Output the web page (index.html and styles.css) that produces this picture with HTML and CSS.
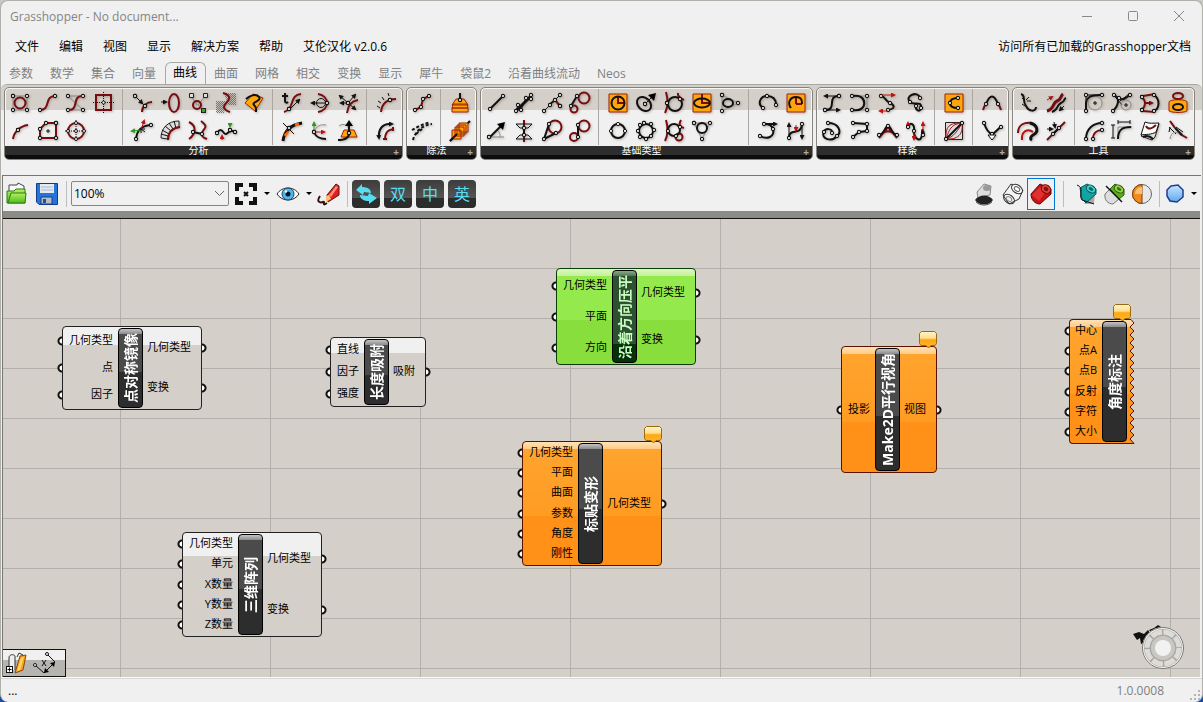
FILE: index.html
```html
<!DOCTYPE html>
<html lang="zh-CN">
<head>
    <meta charset="UTF-8">
    <meta name="viewport" content="width=device-width, initial-scale=1.0">
    <title>Grasshopper - No document...</title>
    <link rel="stylesheet" href="styles.css">
</head>
<body>

<svg class="defs" aria-hidden="true">
    <defs>
        <marker id="dot" markerUnits="userSpaceOnUse" markerWidth="6" markerHeight="6" refX="3" refY="3"><circle cx="3" cy="3" r="1.6" fill="#fff" stroke="#111" stroke-width="1.1"/></marker>
        <marker id="arr" markerUnits="userSpaceOnUse" markerWidth="5" markerHeight="5" refX="3" refY="2.5" orient="auto-start-reverse"><path d="M0 0L5 2.500L0 5Z" fill="context-stroke"/></marker>
        <pattern id="dither" width="2" height="2" patternUnits="userSpaceOnUse"><path d="M0 0H1V1H0ZM1 1H2V2H1Z" fill="#777"/></pattern>
        <linearGradient id="gold" x1="0" y1="0" x2="0" y2="1"><stop offset="0" stop-color="#fff3d0"/><stop offset=".4" stop-color="#ffe08a"/><stop offset=".5" stop-color="#ffa814"/><stop offset="1" stop-color="#ffb62c"/></linearGradient>
        <linearGradient id="edge" x1="0" y1="0" x2="0" y2="1"><stop offset="0" stop-color="#ffe2b8"/><stop offset=".06" stop-color="#ffcb84"/><stop offset=".06" stop-color="#ffa42e"/><stop offset=".6" stop-color="#ff9c22"/><stop offset=".6" stop-color="#ff9018"/></linearGradient>
        <linearGradient id="blue" x1="0" y1="0" x2="0" y2="1"><stop offset="0" stop-color="#c8e6ff"/><stop offset="1" stop-color="#5fa8ee"/></linearGradient>
        <linearGradient id="leaf" x1="0" y1="0" x2="0" y2="1"><stop offset="0" stop-color="#b4f060"/><stop offset="1" stop-color="#4cbc1c"/></linearGradient>
    </defs>
</svg>

<div class="window">
    <header class="titlebar">
        <span class="title">Grasshopper - No document...</span>
        <div class="window-buttons">
            <button aria-label="最小化"><svg width="12" height="12"><path d="M1 6.500H11"/></svg></button>
            <button aria-label="最大化"><svg width="12" height="12"><rect x="1.500" y="1.500" width="9" height="9" rx="1"/></svg></button>
            <button aria-label="关闭"><svg width="12" height="12"><path d="M1 1L11 11M11 1L1 11"/></svg></button>
        </div>
    </header>

    <nav class="menubar">
        <a href="#">文件</a>
        <a href="#">编辑</a>
        <a href="#">视图</a>
        <a href="#">显示</a>
        <a href="#">解决方案</a>
        <a href="#">帮助</a>
        <a href="#">艾伦汉化 v2.0.6</a>
        <a href="#" class="docs">访问所有已加载的Grasshopper文档</a>
    </nav>

    <nav class="tabs">
        <a href="#">参数</a>
        <a href="#">数学</a>
        <a href="#">集合</a>
        <a href="#">向量</a>
        <a href="#" class="active">曲线</a>
        <a href="#">曲面</a>
        <a href="#">网格</a>
        <a href="#">相交</a>
        <a href="#">变换</a>
        <a href="#">显示</a>
        <a href="#">犀牛</a>
        <a href="#">袋鼠2</a>
        <a href="#">沿着曲线流动</a>
        <a href="#">Neos</a>
    </nav>

    <div class="ribbon">
        <section class="panel">
            <div class="groups">
                <div class="group cols-4">
                    <button aria-label="控制多边形"><svg viewBox="0 0 24 24"><path class="g n" d="M5 5H19V19H5Z"/><circle class="r" cx="12" cy="12" r="5.500"/></svg></button>
                    <button aria-label="端点"><svg viewBox="0 0 24 24"><path class="r n" d="M4 19C15 19 8 5 19 5"/></svg></button>
                    <button aria-label="控制点"><svg viewBox="0 0 24 24"><path class="g n" d="M4 19H19L4 5H19"/><path class="r" d="M5 19C15 19 8 5 18 5"/></svg></button>
                    <button aria-label="平面"><svg viewBox="0 0 24 24"><rect class="r" x="4" y="4" width="15" height="15"/><path class="t dots" d="M11.500 1V23M1 11.500H23"/><circle class="w" cx="11.500" cy="11.500" r="1.500"/></svg></button>
                    <button aria-label="中点"><svg viewBox="0 0 24 24"><path class="r" d="M5 20C6 13 12 7 20 6"/><path class="t n" d="M10 11V11"/></svg></button>
                    <button aria-label="多边形中心"><svg viewBox="0 0 24 24"><path class="r n" d="M20 4V19H4V10L10 4Z"/><path class="t" d="M12 10V14M10 12H14"/></svg></button>
                    <button aria-label="圆心"><svg viewBox="0 0 24 24"><circle class="r" cx="12" cy="12" r="8"/><path class="t dots" d="M12 1V23M1 12H23"/><circle class="w" cx="12" cy="12" r="1.500"/><circle class="w" cx="12" cy="4" r="1.500"/><circle class="w" cx="12" cy="20" r="1.500"/><circle class="w" cx="4" cy="12" r="1.500"/><circle class="w" cx="20" cy="12" r="1.500"/></svg></button>
                </div>
                <div class="group cols-5">
                    <button aria-label="曲线最近点"><svg viewBox="0 0 24 24"><path class="r" d="M12 21C12 15 17 11 22 11"/><path class="t a" d="M5 5L12 12"/><path class="t n" d="M5 5V5"/><path class="t n" d="M15 15V15"/></svg></button>
                    <button aria-label="闭合"><svg viewBox="0 0 24 24"><ellipse class="r" cx="16" cy="12" rx="5" ry="9"/><path class="t a" d="M3 11H8"/></svg></button>
                    <button aria-label="包含"><svg viewBox="0 0 24 24"><path class="g" d="M5 5L11 14M19 5L12 14L17 19"/><circle class="r" cx="11" cy="14" r="4"/><path class="box" d="M3.500 2.500H7.500V6.500H3.500ZM17.500 2.500H21.500V6.500H17.500Z"/><rect class="leaf" x="15.500" y="17.500" width="4" height="4"/></svg></button>
                    <button aria-label="曲线侧面"><svg viewBox="0 0 24 24"><path fill="url(#dither)" d="M2 10H12L10 22H2ZM10 2H22V14H14Z"/><path class="r" d="M9 2C13 3 16 5 15 8S10 13 10 16S13 20 16 21"/></svg></button>
                    <button aria-label="曲率曲面"><svg viewBox="0 0 24 24"><path class="o" d="M3 12L11 3L21 7L13 20Z"/><path class="k" d="M4 8C7 5 14 2 17 6S9 11 12 14S14 17 14 21"/></svg></button>
                    <button aria-label="曲率"><svg viewBox="0 0 24 24"><path class="k n" d="M6 20C7 12 10 7 21 6"/><path class="t a up" d="M11 11L2 12"/><path class="t a red" d="M11 11L14 2"/><path class="t" d="M15 13L11 10M11 14V10H15"/></svg></button>
                    <button aria-label="曲率图"><svg viewBox="0 0 24 24"><path class="box" d="M10 20C10 13 14 9 21 8V2C10 2 3 9 3 19Z"/><path class="t" d="M10 17L3 15M11 15L4 11M13 12L7 7M15 10L11 4M18 9L16 2"/><path class="r" d="M10 21C10 13 14 9 22 8"/></svg></button>
                    <button aria-label="曲线接近"><svg viewBox="0 0 24 24"><path class="r" d="M3 3C11 7 10 15 3 20M15 2C24 9 17 9 16 14S19 19 21 20"/><path class="k n" d="M7 13L16 15"/></svg></button>
                    <button aria-label="极值"><svg viewBox="0 0 24 24"><path class="k" d="M3 15C5 10 7 10 10 14S14 9 21 13"/><path class="t n" d="M3 14V14"/><path class="t n" d="M16 11V11"/><path class="t n" d="M21 13V13"/><path class="t a red" d="M8 21V17"/><path class="t a up" d="M16 4V7"/></svg></button>
                </div>
                <div class="group cols-3">
                    <button aria-label="求值曲线"><svg viewBox="0 0 24 24"><path class="k" d="M5 2V10C5 12 7 12 8 11M2 5H8"/><path class="r" d="M4 21C15 18 9 4 21 3"/><path class="t a" d="M9 19L19 9"/><path class="t n" d="M9 18V18"/></svg></button>
                    <button aria-label="水平框架"><svg viewBox="0 0 24 24"><path class="r" d="M10 3C22 5 22 19 10 21"/><circle class="t" cx="13" cy="12" r="4.500"/><path class="t a" d="M18 12H4"/><path class="t n" d="M19 12V12"/></svg></button>
                    <button aria-label="垂直框架"><svg viewBox="0 0 24 24"><path class="r" d="M11 22C12 13 16 10 22 9"/><path class="t a" d="M12 12L4 5"/><path class="t a" d="M12 12L19 4"/><path class="t a" d="M12 12L19 18"/><path class="t a" d="M12 12L5 12"/><path class="t n" d="M12 12V12"/></svg></button>
                    <button aria-label="导数"><svg viewBox="0 0 24 24"><path class="k b" d="M3 22C4 14 9 6 22 4"/><path class="s" d="M5 17L8 12M15 6L19 5"/><path class="t" d="M3 4L14 15M5 14L14 6"/><path class="t n" d="M9 9V9"/></svg></button>
                    <button aria-label="曲线框架"><svg viewBox="0 0 24 24"><path class="g" d="M6 13C8 7 13 5 18 6"/><path class="k" d="M6 13C8 18 11 20 18 20"/><path class="t a up" d="M6 13V4"/><path class="t a red" d="M6 13H16"/><path class="t n" d="M6 13V13"/></svg></button>
                    <button aria-label="垂直平面"><svg viewBox="0 0 24 24"><path class="o" d="M8 11H18L21 18H5Z"/><path class="g" d="M3 7C8 3 14 7 13 14"/><path class="k" d="M2 21C8 21 13 19 13 14"/><path class="k" d="M13 14V6"/><path d="M9 7H17L13 1Z"/><path class="t n" d="M13 14V14"/></svg></button>
                </div>
                <div class="group cols-1">
                    <button aria-label="长度"><svg viewBox="0 0 24 24"><path class="r" d="M7 21C8 12 13 8 22 8"/><path class="t" d="M3 15L6 17M4 10L7 12M8 6L10 9M14 2L15 5"/><path class="t n" d="M16 9V9"/></svg></button>
                    <button aria-label="子曲线"><svg viewBox="0 0 24 24"><path class="k a" d="M17 5C9 4 4 10 5 19"/><path class="t a" d="M14 5H18"/><path class="r" d="M11 21C11 14 13 11 20 10"/><path class="r" d="M9 20H13M19 8V12"/></svg></button>
                </div>
            </div>
            <h2>分析</h2>
        </section>

        <section class="panel">
            <div class="groups">
                <div class="group cols-1">
                    <button aria-label="等分曲线"><svg viewBox="0 0 24 24"><path class="r n" d="M5 19L11 16L13 8L19 5"/></svg></button>
                    <button aria-label="距离等分"><svg viewBox="0 0 24 24"><path class="k dash" d="M3 21C5 13 12 6 22 5"/><path class="k dash" d="M2 11L9 7L20 3M6 15L12 10"/></svg></button>
                </div>
                <div class="group cols-1">
                    <button aria-label="等高线"><svg viewBox="0 0 24 24"><path class="o" d="M8 8H16L20 14H4ZM5 13H19L20 17H4ZM4 17H20V21H4Z"/><path class="k" d="M12 2V8"/><path class="t n" d="M12 9V9"/></svg></button>
                    <button aria-label="虚线"><svg viewBox="0 0 24 24"><path class="k" d="M2 22L22 2"/><path class="o" d="M11 4H20V13H11ZM9 6H18V15H9ZM7 8H16V17H7ZM4 11H13V20H4Z"/><path class="k" d="M2 22L9 15"/></svg></button>
                </div>
            </div>
            <h2>除法</h2>
        </section>

        <section class="panel">
            <div class="groups">
                <div class="group cols-4">
                    <button aria-label="直线"><svg viewBox="0 0 24 24"><path class="k n" d="M6 18L19 5"/></svg></button>
                    <button aria-label="四点直线"><svg viewBox="0 0 24 24"><path class="k b" d="M5 19L19 5"/><path class="t n" d="M4 20L6 14L9 19L14 7L19 8V4"/></svg></button>
                    <button aria-label="切线"><svg viewBox="0 0 24 24"><path class="r" d="M15 9L20 15"/><path class="k" d="M9 14L15 9"/><path class="t n" d="M4 20L10 14"/><path class="t n" d="M15 9L20 4"/><path class="t n" d="M20 15V15"/></svg></button>
                    <button aria-label="外切线"><svg viewBox="0 0 24 24"><circle class="r" cx="16" cy="7" r="5.500"/><circle class="r" cx="6" cy="18" r="3.500"/><path class="k n" d="M3 15L9 5"/></svg></button>
                    <button aria-label="向量直线"><svg viewBox="0 0 24 24"><path class="g" d="M6 18H20M13 11C16 13 16 16 16 18"/><path class="k" d="M6 18L17 7"/><path d="M21 3L19 11L13 5Z"/><path class="t n" d="M5 18V18"/></svg></button>
                    <button aria-label="两平面直线"><svg viewBox="0 0 24 24"><path class="r" d="M12 1V8M12 16V23"/><path class="t" d="M4 5H20L16 9H8ZM4 20H20L16 16H8Z"/><path class="k n" d="M12 9V16"/></svg></button>
                    <button aria-label="圆切线"><svg viewBox="0 0 24 24"><circle class="r" cx="15" cy="8" r="6.500"/><path class="k n" d="M9 5L4 20L16 14"/></svg></button>
                    <button aria-label="内切线"><svg viewBox="0 0 24 24"><circle class="r" cx="16" cy="7" r="5.500"/><circle class="r" cx="6" cy="18" r="4"/><path class="k n" d="M10 6L10 18"/></svg></button>
                </div>
                <div class="group cols-5">
                    <button aria-label="圆"><svg viewBox="0 0 24 24"><path class="o" d="M3 3H21V21H3Z"/><path class="r" d="M12 5V12H19"/><circle class="k" cx="12" cy="12" r="6.500"/></svg></button>
                    <button aria-label="圆 CNR"><svg viewBox="0 0 24 24"><ellipse class="k" cx="10" cy="13" rx="6" ry="8" transform="rotate(-45 10 13)"/><path class="t" d="M11 13L17 7"/><path d="M22 2L20 10L14 4Z"/><path class="t n" d="M11 13V13"/></svg></button>
                    <button aria-label="三切圆"><svg viewBox="0 0 24 24"><path class="r" d="M4 1C6 8 6 16 3 22M16 2C15 6 20 8 22 9"/><circle class="k" cx="13" cy="13" r="7"/><path class="t n" d="M5 12V12"/><path class="t n" d="M18 8V8"/></svg></button>
                    <button aria-label="椭圆"><svg viewBox="0 0 24 24"><path class="o" d="M3 3H21V21H3Z"/><path class="r" d="M12 3V12H20"/><ellipse class="k" cx="12" cy="12" rx="8" ry="4.500"/></svg></button>
                    <button aria-label="内切椭圆"><svg viewBox="0 0 24 24"><path class="g n" d="M4 4L20 12L4 20Z"/><ellipse class="k" cx="10" cy="12" rx="5" ry="4"/></svg></button>
                    <button aria-label="三点圆"><svg viewBox="0 0 24 24"><circle class="k" cx="12" cy="12" r="7"/><circle class="w" cx="12" cy="5" r="1.600"/><circle class="w" cx="5" cy="12" r="1.600"/><circle class="w" cx="19" cy="12" r="1.600"/></svg></button>
                    <button aria-label="拟合圆"><svg viewBox="0 0 24 24"><circle class="k" cx="12" cy="12" r="7"/><path class="none n" d="M10 4L17 5L20 11L17 17L12 20L6 18L4 12L6 6Z"/></svg></button>
                    <button aria-label="两切圆"><svg viewBox="0 0 24 24"><path class="r" d="M4 1C6 8 6 16 3 22M19 1C16 6 18 8 22 9"/><circle class="r" cx="17" cy="18" r="3.500"/><circle class="k" cx="12" cy="11" r="6"/><path class="none n" d="M6 12L18 8L14 17"/></svg></button>
                    <button aria-label="内切圆"><svg viewBox="0 0 24 24"><path class="g n" d="M4 4H20L12 20Z"/><circle class="k" cx="12" cy="9" r="5"/></svg></button>
                </div>
                <div class="group cols-2">
                    <button aria-label="三点弧"><svg viewBox="0 0 24 24"><path class="k n" d="M7 17C1 13 4 5 11 5S20 9 20 14"/></svg></button>
                    <button aria-label="弧"><svg viewBox="0 0 24 24"><path class="o" d="M3 3H21V21H3Z"/><path class="r" d="M12 13V6M12 13H18"/><path class="k" d="M7 17C3 12 6 6 12 6S18 10 18 13"/></svg></button>
                    <button aria-label="SED 弧"><svg viewBox="0 0 24 24"><path class="k a" d="M7 5H20"/><path class="k n" d="M4 17C11 21 19 18 17 10C16 6 13 5 8 5"/></svg></button>
                    <button aria-label="双弧"><svg viewBox="0 0 24 24"><path class="t a" d="M5 19V5"/><path class="t a" d="M18 5V19"/><path class="k n" d="M5 19C5 8 17 18 18 5"/><path class="t a red" d="M12 6V11"/></svg></button>
                </div>
            </div>
            <h2>基础类型</h2>
        </section>

        <section class="panel">
            <div class="groups">
                <div class="group cols-4">
                    <button aria-label="贝塞尔"><svg viewBox="0 0 24 24"><path class="k" d="M19 5C6 5 18 19 5 19"/><path class="t a" d="M19 5H5"/><path class="t a" d="M5 19H19"/><path class="t n" d="M19 5V5"/><path class="t n" d="M5 19V19"/></svg></button>
                    <button aria-label="插值曲线"><svg viewBox="0 0 24 24"><path class="g n" d="M4 5H19V19H4"/><path class="k" d="M5 5C20 2 20 22 5 19"/></svg></button>
                    <button aria-label="切线曲线"><svg viewBox="0 0 24 24"><path class="k n" d="M5 5C9 5 9 10 14 12C20 15 18 18 12 19"/><path class="t a red" d="M6 4H18"/><path class="t a red" d="M12 20H4"/></svg></button>
                    <button aria-label="运动线"><svg viewBox="0 0 24 24"><path class="k n" d="M16 7C14 -1 0 5 6 11C9 15 18 9 17 17C16 22 11 19 12 15"/></svg></button>
                    <button aria-label="闭合曲线"><svg viewBox="0 0 24 24"><path class="k n" d="M8 4C19 4 22 13 17 17C11 24 0 19 4 13C5 9 13 9 12 14"/></svg></button>
                    <button aria-label="多段线"><svg viewBox="0 0 24 24"><path class="k n" d="M5 4L19 5V12L11 13L5 18"/></svg></button>
                    <button aria-label="悬链线"><svg viewBox="0 0 24 24"><path class="r" d="M3 19C8 10 16 10 21 19M3 19L12 8L21 19"/><path class="k n" d="M3 16C8 16 9 7 12 7S16 16 21 16"/></svg></button>
                    <button aria-label="正弦曲线"><svg viewBox="0 0 24 24"><path class="k" d="M4 8C6 2 11 5 10 12S18 26 18 14C18 10 19 9 20 16"/><path class="t a red" d="M4 9V4"/><path class="t a red" d="M10 12V20"/><path class="t a red" d="M19 12V4"/><path class="none n" d="M4 8L10 12L19 16"/></svg></button>
                </div>
                <div class="group cols-1">
                    <button aria-label="测地线"><svg viewBox="0 0 24 24"><path class="o" d="M3 3H21V21H3Z"/><path class="k n" d="M16 7C10 7 8 9 8 12S10 17 16 17"/></svg></button>
                    <button aria-label="补间曲线"><svg viewBox="0 0 24 24"><path class="box" d="M3.500 3.500H20.500V20.500H3.500Z"/><path class="rt" d="M4 20C3 5 10 4 20 4M4 20C8 6 13 5 20 4M4 20C11 19 17 10 20 4M4 20C19 21 21 12 20 4"/><path class="k n" d="M4 20L20 4"/></svg></button>
                </div>
                <div class="group cols-1">
                    <button aria-label="混合曲线"><svg viewBox="0 0 24 24"><path class="r" d="M3 19C4 15 5 14 7 12M21 19C20 15 19 14 17 12"/><path class="k n" d="M6 13C10 3 14 3 18 13"/></svg></button>
                    <button aria-label="连接曲线"><svg viewBox="0 0 24 24"><path class="k n" d="M4 4C6 10 8 14 12 15C16 14 17 10 21 8"/><path class="w" d="M8 16H16L12 21Z"/></svg></button>
                </div>
            </div>
            <h2>样条</h2>
        </section>

        <section class="panel">
            <div class="groups">
                <div class="group cols-2">
                    <button aria-label="延伸曲线"><svg viewBox="0 0 24 24"><path class="k" d="M5 3C10 4 6 10 10 15C13 21 20 21 20 16"/><path class="t" d="M6 7L9 9M13 6L10 9M15 10H11M6 13L9 15"/></svg></button>
                    <button aria-label="翻转曲线"><svg viewBox="0 0 24 24"><path class="r b" d="M3 20C11 18 8 12 13 10S16 5 19 3"/><path class="k" d="M8 21C15 19 12 14 17 12S19 8 22 7"/><path class="rt a" d="M3 9L8 6"/><path class="t a" d="M20 15L16 19"/></svg></button>
                    <button aria-label="连接"><svg viewBox="0 0 24 24"><path class="r" d="M2 14C2 5 9 3 16 4"/><path class="red r" d="M6 21C5 12 12 9 17 13"/><path class="k b" d="M14 4C22 6 23 13 17 16C14 18 14 20 16 21"/></svg></button>
                    <button aria-label="分段"><svg viewBox="0 0 24 24"><path class="r" d="M3 21L21 3"/><path class="k n" d="M9 15L15 9"/><path class="t a" d="M3 10H8"/><path class="t a" d="M10 3L11 8"/></svg></button>
                </div>
                <div class="group cols-4">
                    <button aria-label="倒角"><svg viewBox="0 0 24 24"><circle class="g" cx="13" cy="12" r="7"/><path class="t" d="M13 10V14M11 12H15"/><path class="t n" d="M4 20V4H20"/><path class="k" d="M4 19V12C5 6 8 4 19 4"/></svg></button>
                    <button aria-label="距离倒角"><svg viewBox="0 0 24 24"><path class="t" d="M3 3L12 14M10 10L19 3"/><circle class="g" cx="16" cy="14" r="5"/><path class="k n" d="M4 4C10 7 9 14 3 20"/><path class="k n" d="M9 7C12 10 16 7 20 4"/><path class="t" d="M16 12V16M14 14H18"/></svg></button>
                    <button aria-label="偏移曲线"><svg viewBox="0 0 24 24"><path class="r" d="M4 6C8 10 8 15 4 19M5 5L17 3M5 20L17 21"/><path class="k n" d="M16 4C22 8 22 17 16 20"/><path class="r a" d="M7 12H14"/><path class="t n" d="M4 6V6"/><path class="t n" d="M4 19V19"/></svg></button>
                    <button aria-label="投影"><svg viewBox="0 0 24 24"><path class="o" d="M3 11C3 8 21 8 21 11V20C17 22 7 22 3 20Z"/><ellipse class="r" cx="12" cy="5" rx="5" ry="3"/><ellipse class="k" cx="12" cy="16" rx="5" ry="3"/></svg></button>
                    <button aria-label="偏移"><svg viewBox="0 0 24 24"><path class="k n" d="M4 20C4 10 11 4 20 4"/><path class="r n" d="M11 20C11 14 15 11 20 11"/></svg></button>
                    <button aria-label="圆角距离"><svg viewBox="0 0 24 24"><path class="t" d="M3 6V19M1 6H5M1 19H5M8 3H20M8 1V5M20 1V5"/><path class="g" d="M8 8H22M8 8V20"/><path class="k" d="M8 20C8 11 12 8 21 8"/></svg></button>
                    <button aria-label="拉回曲线"><svg viewBox="0 0 24 24"><path class="box" d="M3 17L9 10L21 5L17 18L14 21Z"/><path class="w" d="M7 3C11 5 16 4 21 4L18 13C13 16 8 15 3 16Z"/><path class="r" d="M8 7C10 11 14 10 18 6"/><path class="k" d="M5 18C9 16 13 18 15 20"/></svg></button>
                    <button aria-label="简化"><svg viewBox="0 0 24 24"><path class="r" d="M4 2L9 9M14 15L21 19"/><path class="t" d="M4 8L3 13M3 8L10 15M10 8L17 13"/><path class="g" d="M4 20C5 13 10 11 14 16"/><path class="k" d="M9 9L16 16"/></svg></button>
                </div>
            </div>
            <h2>工具</h2>
        </section>
    </div>

    <div class="toolbar">
        <button class="tool" aria-label="打开"><svg width="24" height="24" viewBox="0 0 24 24"><path d="M4 9V3H12L13 1L19 4V9" fill="#fafafa" stroke="#444"/><path d="M2 21V9H9L11 7H20V21Z" fill="url(#leaf)" stroke="#2f7d12"/><path d="M3 21L6 11H21L20 21Z" fill="url(#leaf)" stroke="#2f7d12"/></svg></button>
        <button class="tool save" aria-label="保存"><svg width="24" height="24" viewBox="0 0 24 24"><path d="M1.500 1.500H22.500V22.500H4L1.500 20Z" fill="#2474da" stroke="#163c88"/><path d="M5 2H19V11H5Z" fill="#e4eaf2"/><path d="M6 5H18M6 8H18" stroke="#aab8cc"/><path d="M6 15H17V22H6Z" fill="#b8bcc6" stroke="#163c88"/><path d="M8 17H11V21H8Z" fill="#1c4ea4"/></svg></button>
        <span class="sep"></span>
        <select aria-label="缩放"><option>100%</option></select>
        <button class="tool" aria-label="缩放范围"><svg width="24" height="24" viewBox="0 0 24 24"><path d="M3 9V3H9M15 3H21V9M21 15V21H15M9 21H3V15" fill="none" stroke="#111" stroke-width="4"/><path d="M10 10L14 14M14 10L10 14" stroke="#111" stroke-width="2"/></svg></button>
        <button class="caret" aria-label="缩放选项"></button>
        <button class="tool" aria-label="命名视图"><svg width="24" height="24" viewBox="0 0 24 24"><path d="M1 12C6 4 18 4 23 12C18 20 6 20 1 12Z" fill="#fff" stroke="#222"/><circle cx="12" cy="12" r="6" fill="#55b4e6" stroke="#17486e"/><circle cx="12" cy="12" r="2.500" fill="#081828"/><circle cx="10" cy="9.500" r="1.200" fill="#fff"/></svg></button>
        <button class="caret" aria-label="视图选项"></button>
        <button class="tool pen" aria-label="草图"><svg width="24" height="24" viewBox="0 0 24 24"><path d="M3 14C-1 20 3 21 6 20S4 25 10 21" fill="none" stroke="#311" stroke-width="2"/><path d="M10 13L19 2L22 4V13L11 20Z" fill="#e02020" stroke="#6a0d0d"/><path d="M12 13L19 4L21 5L14 15Z" fill="#ff8d78"/><path d="M9 14L12 13L14 17L9 20Z" fill="#ffc070"/></svg></button>
        <span class="sep"></span>
        <button class="lang" aria-label="切换"><svg width="24" height="24" viewBox="0 0 24 24"><path fill="#5adcf0" d="M8 2V5C13 5 17 7 17 11L10 10L9 13L2 8ZM15 22V19C10 19 6 17 6 13L14 14L15 11L23 16Z"/></svg></button>
        <button class="lang">双</button>
        <button class="lang">中</button>
        <button class="lang">英</button>

        <div class="display">
            <button class="tool wide" aria-label="不预览"><svg width="24" height="24" viewBox="0 0 24 24"><path d="M5 10L12 2L19 4L18 13L6 16Z" fill="#ddd" stroke="#888"/><ellipse cx="15" cy="6" rx="4" ry="3" fill="#999"/><path d="M3 18C7 12 17 12 21 18C17 24 7 24 3 18Z" fill="#222"/><path d="M4 20C8 24 16 24 20 20" fill="none" stroke="#555"/></svg></button>
            <button class="tool wide" aria-label="线框预览"><svg width="24" height="24" viewBox="0 0 24 24"><path d="M2 13L10 2L22 8L18 17L8 22Z" fill="#f4f4f4" stroke="#333"/><ellipse cx="16" cy="7" rx="6" ry="4" transform="rotate(35 16 7)" fill="#fff" stroke="#333"/><ellipse cx="16" cy="7" rx="3" ry="2" transform="rotate(35 16 7)" fill="none" stroke="#555"/><ellipse cx="8" cy="17" rx="6" ry="4" transform="rotate(35 8 17)" fill="none" stroke="#333"/><ellipse cx="8" cy="17" rx="3" ry="2" transform="rotate(35 8 17)" fill="none" stroke="#888"/></svg></button>
            <button class="tool on" aria-label="着色预览"><svg width="24" height="24" viewBox="0 0 24 24"><path d="M2 12L11 2L22 7V12L11 22C6 22 2 18 2 12Z" fill="#c81414" stroke="#5e0808"/><path d="M3 13L11 5L17 10L10 19Z" fill="#e03030"/><ellipse cx="17" cy="7" rx="5" ry="4" transform="rotate(35 17 7)" fill="#e24242" stroke="#6a0a0a"/><ellipse cx="17" cy="7" rx="2.500" ry="2" transform="rotate(35 17 7)" fill="#8a0e0e"/></svg></button>
            <span class="sep"></span>
            <button class="tool" aria-label="仅选中"><svg width="24" height="24" viewBox="0 0 24 24"><path d="M9 22L20 22L21 10L12 21Z" fill="#aaa"/><path d="M6 6L13 2L22 7V12L12 21L8 17Z" fill="#12a3a3" stroke="#075656"/><ellipse cx="17" cy="7" rx="5" ry="3.500" transform="rotate(30 17 7)" fill="#3fd0cc" stroke="#075656"/><ellipse cx="17" cy="7" rx="2.500" ry="1.500" transform="rotate(30 17 7)" fill="#0a6464"/><path d="M3 3C11 6 4 13 8 18L20 22" fill="none" stroke="#111"/></svg></button>
            <button class="tool" aria-label="文档预览"><svg width="24" height="24" viewBox="0 0 24 24"><path d="M3 12L8 7L17 17L11 22C6 22 2 18 3 12Z" fill="#ddd" stroke="#777"/><path d="M8 7L13 2L22 7V13L17 17Z" fill="#5cab1e" stroke="#2c5a0a"/><ellipse cx="17" cy="7" rx="5" ry="3.500" transform="rotate(30 17 7)" fill="#98d850" stroke="#2c5a0a"/><ellipse cx="17" cy="7" rx="2.500" ry="1.500" transform="rotate(30 17 7)" fill="#3a7010"/><path d="M4 4L20 20" stroke="#111" stroke-width="1.500"/></svg></button>
            <button class="tool" aria-label="预览网格"><svg width="24" height="24" viewBox="0 0 24 24"><circle cx="12" cy="12" r="9.500" fill="#e8e8e8" stroke="#666"/><path d="M12 2.500A9.500 9.500 0 0 0 12 21.500Z" fill="#f08a1c" stroke="#7a3c06"/><path d="M5 12C5 8 8 5 12 5V12Z" fill="#ffc070"/></svg></button>
            <span class="sep near"></span>
            <button class="tool" aria-label="预览质量"><svg width="24" height="24" viewBox="0 0 24 24"><path d="M8 4L15 3L20 8L20 15L14 20L7 19L4 14L4 8Z" fill="url(#blue)" stroke="#1c3f8c" stroke-width="1.500"/></svg></button>
            <button class="caret" aria-label="质量选项"></button>
        </div>
    </div>

    <main class="canvas">
        <div class="node gray mirror">
            <ul class="in"><li>几何类型</li><li>点</li><li>因子</li></ul>
            <div class="core"><span>点对称镜像</span></div>
            <ul class="out"><li>几何类型</li><li>变换</li></ul>
        </div>

        <div class="node gray snap">
            <ul class="in"><li>直线</li><li>因子</li><li>强度</li></ul>
            <div class="core"><span>长度吸附</span></div>
            <ul class="out"><li>吸附</li></ul>
        </div>

        <div class="node green flatten">
            <ul class="in"><li>几何类型</li><li>平面</li><li>方向</li></ul>
            <div class="core"><span>沿着方向压平</span></div>
            <ul class="out"><li>几何类型</li><li>变换</li></ul>
        </div>

        <div class="node orange splop">
            <svg class="balloon" width="18" height="18" viewBox="0 0 18 18"><path d="M2.500 0.500H15.500L17.500 2.500V12.500L16 14.500H12L9.500 17L7 14.500H2L0.500 12.500V2.500Z" fill="url(#gold)" stroke="#9a6a10"/></svg>
            <ul class="in"><li>几何类型</li><li>平面</li><li>曲面</li><li>参数</li><li>角度</li><li>刚性</li></ul>
            <div class="core"><span>标贴变形</span></div>
            <ul class="out"><li>几何类型</li></ul>
        </div>

        <div class="node orange make2d">
            <svg class="balloon" width="18" height="18" viewBox="0 0 18 18"><path d="M2.500 0.500H15.500L17.500 2.500V12.500L16 14.500H12L9.500 17L7 14.500H2L0.500 12.500V2.500Z" fill="url(#gold)" stroke="#9a6a10"/></svg>
            <ul class="in"><li>投影</li></ul>
            <div class="core"><span>Make2D平行视角</span></div>
            <ul class="out"><li>视图</li></ul>
        </div>

        <div class="node orange angle">
            <svg class="balloon" width="18" height="18" viewBox="0 0 18 18"><path d="M2.500 0.500H15.500L17.500 2.500V12.500L16 14.500H12L9.500 17L7 14.500H2L0.500 12.500V2.500Z" fill="url(#gold)" stroke="#9a6a10"/></svg>
            <svg class="torn" width="6" height="125" viewBox="0 0 6 125"><path d="M0 .5H2L5 4L1 8L5 12L1 16L5 20L1 24L5 28L1 32L5 36L1 40L5 44L1 48L5 52L1 56L5 60L1 64L5 68L1 72L5 76L1 80L5 84L1 88L5 92L1 96L5 100L1 104L5 108L1 112L5 116L1 120L5 124.500H0" fill="url(#edge)" stroke="#5a1200"/></svg>
            <ul class="in"><li>中心</li><li>点A</li><li>点B</li><li>反射</li><li>字符</li><li>大小</li></ul>
            <div class="core"><span>角度标注</span></div>
        </div>

        <div class="node gray array">
            <ul class="in"><li>几何类型</li><li>单元</li><li>X数量</li><li>Y数量</li><li>Z数量</li></ul>
            <div class="core"><span>三维阵列</span></div>
            <ul class="out"><li>几何类型</li><li>变换</li></ul>
        </div>

        <div class="markov">
            <button aria-label="添加组件"><svg width="28" height="26" viewBox="0 0 28 26"><path d="M6 20V8C6 4 11 4 12 6V20" fill="#eee" stroke="#333"/><path d="M14 7L16 3L20 5" fill="none" stroke="#333"/><path d="M17 6L23 5L20 20L12 23Z" fill="#f9a21c" stroke="#8a4a04"/><path d="M18 8L21 7L17 20L14 21Z" fill="#ffd66a"/><rect x="3.500" y="16.500" width="6" height="6" fill="#fff" stroke="#111"/><path d="M6.500 17.500V21.500M4.500 19.500H8.500" stroke="#111"/></svg></button>
            <button aria-label="距离"><svg width="28" height="26" viewBox="0 0 28 26"><path d="M4 15L13 23L24 12L16 4" fill="none" stroke="#111"/><path d="M13 23L14 18L18 22ZM24 12L23 17L19 13Z"/><path d="M11 10L15 16M15 10L11 16" stroke="#111"/><circle cx="16" cy="4" r="1.500" fill="#fff" stroke="#111"/><circle cx="4" cy="15" r="1.500" fill="#fff" stroke="#111"/></svg></button>
        </div>

        <svg class="compass" width="54" height="46" viewBox="0 0 54 46">
            <path d="M1 10L7 8L12 10L16 6L18 9L12 19L9 20L8 14L5 16Z" fill="#111"/>
            <path d="M17 6L22 4L26 1L29 3L27 6L20 9Z" fill="#111"/>
            <circle cx="31" cy="24" r="20" fill="#aaa8a3" stroke="#f4f4f4" stroke-width="2"/>
            <circle cx="31" cy="24" r="20.500" fill="none" stroke="#77746f"/>
            <circle cx="31" cy="24" r="16" fill="none" stroke="#dedcd8" stroke-width="5" stroke-dasharray="11 1.570"/>
            <circle cx="31" cy="24" r="12" fill="#c9c7c3"/>
            <circle cx="31" cy="24" r="8" fill="#f2f2f2"/>
        </svg>
    </main>

    <footer class="statusbar">
        <span>...</span>
        <span class="version">1.0.0008</span>
        <svg width="10" height="10" viewBox="0 0 10 10"><path d="M8 0H10V2H8ZM4 4H6V6H4ZM8 4H10V6H8ZM0 8H2V10H0ZM4 8H6V10H4ZM8 8H10V10H8Z" fill="#b4b4b4"/></svg>
    </footer>
</div>

</body>
</html>
```
FILE: styles.css
```css
* {
    box-sizing: border-box;
}
body {
    margin: 0;
    background: linear-gradient(#c8c8c4 60%, #1e4a9a);
    font-family: "Open Sans", "Noto Sans CJK SC", sans-serif;
    font-size: 12px;
    color: #000;
}
button {
    padding: 0;
    border: 0;
    background: none;
    font: inherit;
}
a {
    color: inherit;
    text-decoration: none;
}
ul {
    list-style: none;
    margin: 0;
    padding: 0;
}
.defs {
    position: absolute;
    width: 0;
    height: 0;
}
.window {
    display: flex;
    flex-direction: column;
    min-height: calc(100vh - 1px);
    border: 1px solid #b0b0aa;
    border-bottom: 0;
    border-radius: 8px;
    background-color: #f0f0f0;
}

/* title, menu and tabs */
.titlebar {
    display: flex;
    align-items: center;
    justify-content: space-between;
    height: 30px;
    padding-left: 9px;
    color: #858585;
}
.window-buttons {
    display: flex;
}
.window-buttons button {
    display: grid;
    place-items: center;
    width: 46px;
    height: 30px;
}
.window-buttons svg {
    fill: none;
    stroke: #888;
}
.menubar {
    display: flex;
    align-items: center;
    gap: 20px;
    height: 30px;
    padding: 0 11px 0 14px;
}
.docs {
    margin-left: auto;
}
.tabs {
    display: flex;
    align-items: flex-end;
    height: 23px;
    color: #808080;
}
.tabs a {
    height: 20px;
    padding: 0 9px 0 8px;
    line-height: 20px;
}
.tabs .active {
    height: 23px;
    margin-bottom: -1px;
    padding: 0 8px 0 7px;
    border: 1px solid #a8a8a2;
    border-bottom: 0;
    border-radius: 6px 6px 0 0;
    background-color: #f0f0f0;
    color: #000;
}

/* component ribbon */
.ribbon {
    display: flex;
    gap: 3px;
    padding: 2px 3px 15px;
    border-top: 1px solid #a8a8a2;
    border-radius: 6px 6px 0 0;
    background: linear-gradient(#d4cfc9 25px, #f0f0f0 25px);
}
.panel {
    overflow: hidden;
    border: 1px solid #86847f;
    border-radius: 5px;
    box-shadow: inset 0 0 0 1px #f6f6f6;
}
.groups {
    display: flex;
    padding: 1px 2px 0 1px;
}
.group {
    display: grid;
    grid-auto-rows: 28px;
}
.group + .group {
    margin-left: 4px;
    padding-left: 5px;
    border-left: 1px solid #aaa7a2;
}
.cols-1 { grid-template-columns: 28px; }
.cols-2 { grid-template-columns: repeat(2, 28px); }
.cols-3 { grid-template-columns: repeat(3, 28px); }
.cols-4 { grid-template-columns: repeat(4, 28px); }
.cols-5 { grid-template-columns: repeat(5, 28px); }
.group button {
    display: grid;
    place-items: center;
}
.group svg {
    width: 24px;
    height: 24px;
    overflow: visible;
    filter: drop-shadow(1px 1px 1px rgba(90, 70, 50, .35));
}
.panel h2 {
    position: relative;
    height: 13px;
    margin: 1px 0 0;
    padding-right: 10px;
    background: linear-gradient(#2d2d2d 9px, #0c0c0c 9px);
    color: #fff;
    font-size: 10px;
    font-weight: normal;
    line-height: 9px;
    text-align: center;
}
.panel h2::after {
    content: "+";
    position: absolute;
    right: 3px;
    top: 2px;
    color: #aaa;
    font-weight: bold;
}

/* icon strokes */
.k, .r, .t, .g, .s, .rt, .none {
    fill: none;
}
.k {
    stroke: #111;
    stroke-width: 2;
}
.r {
    stroke: #760d10;
    stroke-width: 2;
}
.b {
    stroke-width: 3;
}
.rt {
    stroke: #a01818;
}
.t {
    stroke: #111;
}
.g {
    stroke: #8a8a8a;
}
.s {
    stroke: #f60;
    stroke-width: 3;
}
.o {
    fill: #ffa60c;
    stroke: #a02408;
}
.w {
    fill: #fff;
    stroke: #111;
}
.box {
    fill: #ddd;
    stroke: #222;
}
.leaf {
    fill: #46a01e;
    stroke: #222;
}
.red {
    stroke: #c01010;
}
.up {
    stroke: #2a9a20;
}
.n {
    marker: url(#dot);
}
.a {
    marker-end: url(#arr);
}
.dash {
    stroke-dasharray: 3 2;
}
.dots {
    stroke-dasharray: 1 1;
}

/* canvas toolbar */
.toolbar {
    display: flex;
    align-items: center;
    height: 36px;
    margin: 0 1px;
    padding-left: 1px;
    border-top: 1px solid #77776f;
    border-left: 1px solid #77776f;
}
.tool {
    display: grid;
    place-items: center;
    width: 26px;
    height: 32px;
}
.save {
    margin-left: 4px;
}
.pen {
    width: 24px;
}
.sep {
    width: 1px;
    height: 26px;
    margin: 0 4px 0 6px;
    background-color: #bdbdbd;
}
.toolbar select {
    width: 158px;
    height: 25px;
    margin-right: 4px;
    padding: 0 8px 0 2px;
    appearance: none;
    border: 1px solid #868686;
    border-radius: 2px;
    background: #f0f0f0 url("data:image/svg+xml,%3Csvg xmlns='http://www.w3.org/2000/svg' width='9' height='5'%3E%3Cpath d='M0 0L4.500 4.500L9 0' fill='none' stroke='%23666'/%3E%3C/svg%3E") no-repeat right 4px center;
    font: inherit;
    font-size: 12px;
}
.caret {
    display: grid;
    place-items: center;
    width: 16px;
    height: 32px;
}
.caret::after {
    content: "";
    border: 3px solid transparent;
    border-top-color: #000;
    border-bottom: 0;
}
.lang {
    display: grid;
    place-items: center;
    width: 28px;
    height: 28px;
    margin-right: 4px;
    border-radius: 4px;
    background: linear-gradient(#3c3c3c, #555 65%, #2c2c2c 65%);
    color: #5adcf0;
    font-size: 16px;
    line-height: 24px;
}
.display {
    display: flex;
    align-items: center;
    margin: 0 2px 0 auto;
}
.display .tool {
    width: 28px;
}
.display .wide {
    width: 29px;
}
.display .on {
    border: 1px solid #0078d7;
}
.display .sep {
    margin: 0 8px;
}
.display .near {
    margin: 0 1px 0 3px;
}
.display .caret {
    width: 10px;
}

/* node canvas */
.canvas {
    position: relative;
    flex: 1;
    min-height: 466px;
    margin: 0 2px 0 1px;
    border-left: 1px solid #77776f;
    background-color: #d4cfc9;
    background-image:
        linear-gradient(#8c8c87 7px, #111 7px),
        linear-gradient(90deg, #b3b0ab 1px, transparent 1px),
        linear-gradient(#b3b0ab 1px, transparent 1px);
    background-size: 100% 8px, 150px 50px, 150px 50px;
    background-position: 0 0, 117px 7px, 117px 7px;
    background-repeat: no-repeat, repeat, repeat;
}
.node {
    position: absolute;
    display: flex;
    padding: 1px 0;
    border: 1px solid #222;
    border-radius: 4px;
    font-size: 11px;
}
.in, .out {
    display: flex;
    flex: 1;
    flex-direction: column;
}
.in li, .out li {
    position: relative;
    display: flex;
    flex: 1;
    align-items: center;
    padding-bottom: 2px;
    line-height: 12px;
}
.in li {
    justify-content: flex-end;
    padding-right: 5px;
}
.out li {
    padding-left: 1px;
}
.in li::before, .out li::after {
    content: "";
    position: absolute;
    top: calc(50% - 5px);
    width: 5px;
    height: 10px;
}
.in li::before {
    left: -6px;
    background: radial-gradient(circle at 100% 50%, #fff 2px, #111 3px, #111 4px, transparent 5px);
}
.out li::after {
    right: -6px;
    background: radial-gradient(circle at 0 50%, #fff 2px, #111 3px, #111 4px, transparent 5px);
}
.core {
    display: grid;
    place-items: center;
    width: 25px;
    margin-right: 3px;
    border: 1px solid #000;
    border-radius: 4px;
    background: linear-gradient(#c4c4c4, #8a8a8a 5px, #4b4b4b 5px, #4b4b4b 55%, #2d2d2d 55%);
    color: #fff;
    font-size: 14px;
    font-weight: bold;
    font-family: "Noto Sans", "Noto Sans CJK SC", sans-serif;
    line-height: 20px;
}
.core span {
    writing-mode: vertical-rl;
    text-orientation: sideways;
    transform: rotate(180deg);
    white-space: nowrap;
}
.gray {
    background: linear-gradient(#f0f0f0 22%, #d4cfc9 22%);
}
.green {
    border-color: #0a3c0a;
    background: linear-gradient(#dcf8c0, #c4f29a 7px, #94ea4c 7px, #94ea4c 54%, #88de3c 54%);
}
.green .core {
    background: linear-gradient(#8aa88a, #4e7a50 5px, #2c5030 5px, #2c5030 80%, #06320a 80%);
    color: #c8ffc0;
}
.orange {
    border-color: #5a1200;
    background: linear-gradient(#ffe2b8, #ffcb84 7px, #ffa42e 7px, #ff9c22 60%, #ff9018 60%);
}
.mirror {
    left: 59px;
    top: 115px;
    width: 140px;
    height: 84px;
}
.snap {
    left: 327px;
    top: 126px;
    width: 96px;
    height: 70px;
}
.flatten {
    left: 553px;
    top: 57px;
    width: 140px;
    height: 97px;
}
.splop {
    left: 519px;
    top: 230px;
    width: 140px;
    height: 125px;
}
.make2d {
    left: 838px;
    top: 135px;
    width: 96px;
    height: 127px;
}
.angle {
    left: 1066px;
    top: 108px;
    width: 61px;
    height: 125px;
    border-right: 0;
    border-radius: 4px 0 0 4px;
}
.array {
    left: 179px;
    top: 321px;
    width: 140px;
    height: 105px;
}
.balloon {
    position: absolute;
    right: -1px;
    top: -16px;
    z-index: 1;
}
.torn {
    position: absolute;
    right: -5px;
    top: -1px;
}
.markov {
    position: absolute;
    left: 0;
    bottom: 0;
    display: flex;
    padding-right: 6px;
    border: 1px solid #111;
    border-left: 0;
    background: linear-gradient(#f0f0f0 10px, #b6b4b0 10px);
}
.markov button {
    display: grid;
    height: 26px;
}
.compass {
    position: absolute;
    right: 14px;
    bottom: 7px;
}

/* status bar */
.statusbar {
    display: flex;
    align-items: center;
    height: 25px;
    padding: 0 2px 0 7px;
    border-top: 1px solid #fafafa;
    box-shadow: inset 0 1px 0 #d7d7d7;
}
.version {
    margin-left: auto;
    margin-right: 26px;
    color: #808080;
}
.statusbar svg {
    align-self: flex-end;
    margin-bottom: 2px;
}
```
